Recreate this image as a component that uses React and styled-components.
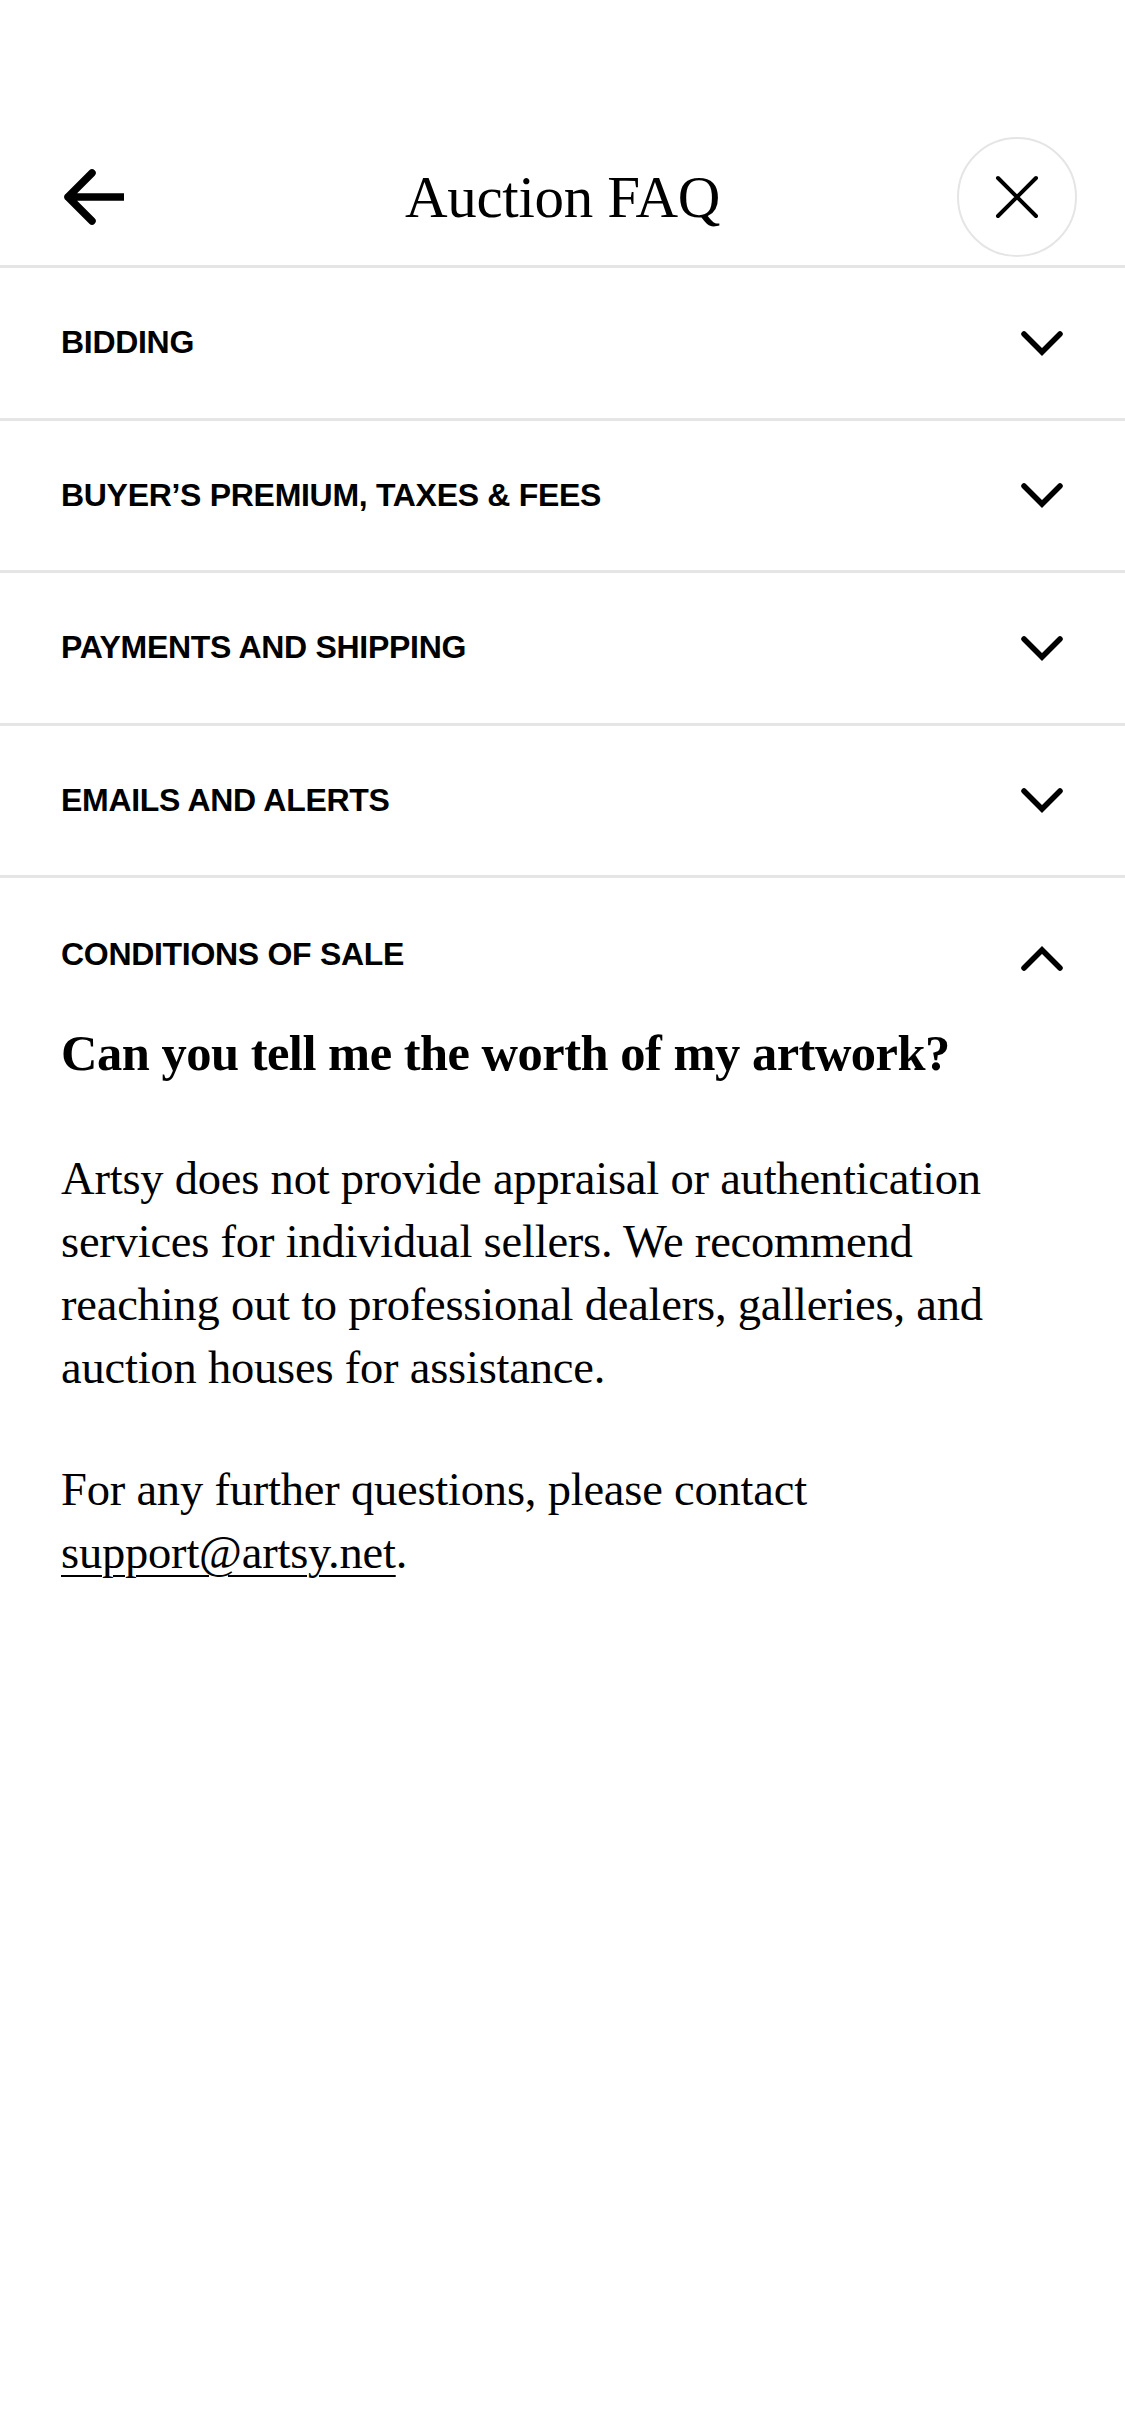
import React, { useState } from "react";
import styled, { createGlobalStyle } from "styled-components";

const GlobalStyle = createGlobalStyle`
  html, body {
    margin: 0;
    padding: 0;
    background: #ffffff;
  }
  body {
    font-family: "Liberation Serif", serif;
    color: #000000;
  }
  * {
    box-sizing: border-box;
  }
`;

const sections = [
  { id: "bidding", title: "BIDDING" },
  { id: "premium", title: "BUYER’S PREMIUM, TAXES & FEES" },
  { id: "payments", title: "PAYMENTS AND SHIPPING" },
  { id: "emails", title: "EMAILS AND ALERTS" },
  { id: "conditions", title: "CONDITIONS OF SALE" },
];

const Page = styled.div`
  width: 1125px;
  min-height: 2436px;
  background: #ffffff;
`;

const Header = styled.header`
  display: grid;
  grid-template-columns: 1fr auto 1fr;
  align-items: center;
  padding: 137px 48px 8px 48px;
  border-bottom: 3px solid #e5e5e5;
`;

const BackButton = styled.button`
  justify-self: start;
  display: flex;
  align-items: center;
  margin-left: 14px;
  padding: 0;
  border: none;
  background: none;
  cursor: pointer;
`;

const Title = styled.h1`
  margin: 0;
  font-family: "Liberation Serif", serif;
  font-weight: 400;
  font-size: 59px;
  letter-spacing: -0.3px;
  line-height: 1;
`;

const CloseButton = styled.button`
  justify-self: end;
  width: 120px;
  height: 120px;
  border-radius: 50%;
  border: 2px solid #e5e5e5;
  background: #ffffff;
  display: flex;
  align-items: center;
  justify-content: center;
  padding: 0;
  cursor: pointer;
`;

const Section = styled.section`
  border-bottom: ${(p) => (p.$open ? "none" : "3px solid #e5e5e5")};
`;

const RowHeader = styled.button`
  width: 100%;
  height: ${(p) => (p.$open ? "143px" : "149.5px")};
  padding: ${(p) => (p.$open ? "10px 62px 0 61px" : "0 62px 0 61px")};
  display: flex;
  align-items: center;
  justify-content: space-between;
  border: none;
  background: none;
  cursor: pointer;
  text-align: left;
`;

const RowLabel = styled.span`
  font-family: "Liberation Sans", Arial, sans-serif;
  font-weight: 700;
  font-size: 32px;
  letter-spacing: -0.3px;
  color: #000000;
`;

const ChevronSvg = styled.svg`
  flex-shrink: 0;
  margin-top: ${(p) => (p.$up ? "8px" : "0")};
`;

const Panel = styled.div`
  padding: 0 61px;
`;

const Question = styled.h2`
  margin: 0;
  font-family: "Liberation Serif", serif;
  font-weight: 700;
  font-size: 50.5px;
  line-height: 64px;
  letter-spacing: -0.5px;
`;

const Body = styled.p`
  max-width: 960px;
  margin: ${(p) => (p.$first ? "62px" : "59px")} 0 0;
  font-family: "Liberation Serif", serif;
  font-size: 46.5px;
  line-height: 63px;
  letter-spacing: -0.2px;
`;

const Mail = styled.a`
  color: #000000;
  text-decoration: underline;
  text-decoration-thickness: 2px;
  text-underline-offset: 7px;
`;

const BackIcon = () => (
  <svg width="62" height="56" viewBox="0 0 62 56" fill="none">
    <path
      d="M30 4 L6 28 L30 52 M6 28 H61"
      stroke="#000"
      strokeWidth="7.5"
      strokeLinecap="round"
      strokeLinejoin="round"
    />
  </svg>
);

const CloseIcon = () => (
  <svg width="44" height="44" viewBox="0 0 44 44" fill="none">
    <path d="M3 3 L41 41 M41 3 L3 41" stroke="#000" strokeWidth="4" strokeLinecap="round" />
  </svg>
);

const Chevron = ({ up }) => (
  <ChevronSvg $up={up} width="42" height="26" viewBox="0 0 42 26" fill="none">
    <path
      d={up ? "M3 22 L21 4 L39 22" : "M3 4 L21 22 L39 4"}
      stroke="#000"
      strokeWidth="5.5"
      strokeLinecap="round"
      strokeLinejoin="miter"
    />
  </ChevronSvg>
);

export default function App() {
  const [open, setOpen] = useState("conditions");

  return (
    <Page>
      <GlobalStyle />
      <Header>
        <BackButton aria-label="Back">
          <BackIcon />
        </BackButton>
        <Title>Auction FAQ</Title>
        <CloseButton aria-label="Close">
          <CloseIcon />
        </CloseButton>
      </Header>
      {sections.map((s) => {
        const isOpen = open === s.id;
        return (
          <Section key={s.id} $open={isOpen}>
            <RowHeader $open={isOpen} onClick={() => setOpen(isOpen ? null : s.id)}>
              <RowLabel>{s.title}</RowLabel>
              <Chevron up={isOpen} />
            </RowHeader>
            {isOpen && s.id === "conditions" && (
              <Panel>
                <Question>Can you tell me the worth of my artwork?</Question>
                <Body $first>
                  Artsy does not provide appraisal or authentication services for individual
                  sellers. We recommend reaching out to professional dealers, galleries, and
                  auction houses for assistance.
                </Body>
                <Body>
                  For any further questions, please contact{" "}
                  <Mail href="mailto:support@artsy.net">support@artsy.net</Mail>.
                </Body>
              </Panel>
            )}
          </Section>
        );
      })}
    </Page>
  );
}
